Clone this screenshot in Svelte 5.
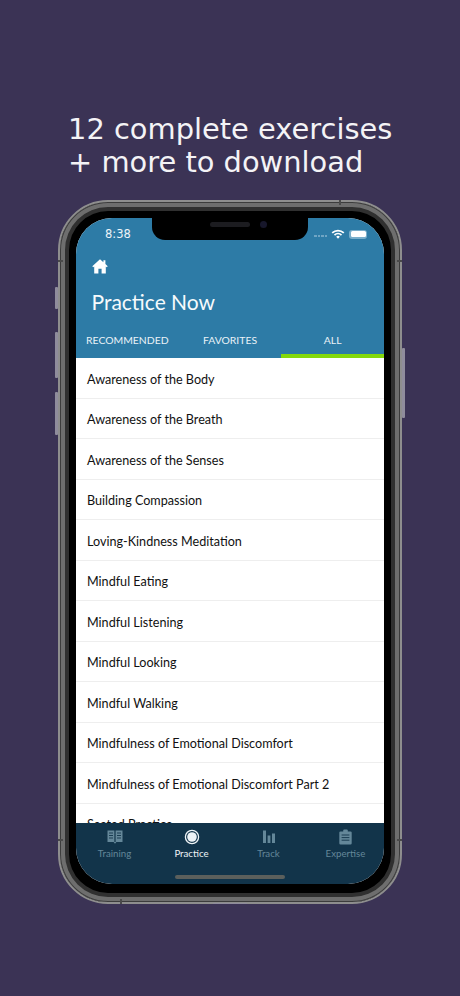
<script>
	const tabs = [
		{ label: "RECOMMENDED" },
		{ label: "FAVORITES" },
		{ label: "ALL", active: true },
	];

	const exercises = [
		"Awareness of the Body",
		"Awareness of the Breath",
		"Awareness of the Senses",
		"Building Compassion",
		"Loving-Kindness Meditation",
		"Mindful Eating",
		"Mindful Listening",
		"Mindful Looking",
		"Mindful Walking",
		"Mindfulness of Emotional Discomfort",
		"Mindfulness of Emotional Discomfort Part 2",
		"Seated Practice",
	];
</script>

<div class="page">
	<h1 class="headline">12 complete exercises<br />+ more to download</h1>

	<div class="phone">
		<span class="btn btn-mute"></span>
		<span class="btn btn-up"></span>
		<span class="btn btn-down"></span>
		<span class="btn btn-power"></span>
		<span class="btn btn-bottom"></span>

		<span class="band band-top"></span>
		<span class="band band-bottom"></span>
		<span class="band band-lt"></span>
		<span class="band band-rt"></span>
		<span class="band band-lb"></span>
		<span class="band band-rb"></span>

		<div class="screen">
			<div class="notch">
				<span class="speaker"></span>
				<span class="camera"></span>
			</div>

			<header class="header">
				<div class="status">
					<span class="time">8:38</span>
					<div class="status-icons">
						<span class="signal"><i></i><i></i><i></i><i></i></span>
						<svg class="wifi" width="14" height="10" viewBox="0 0 14 10" aria-hidden="true">
							<path d="M0.6 3.3A9 9 0 0 1 13.4 3.3L12.2 4.6A7.3 7.3 0 0 0 1.8 4.6Z" fill="#fff" />
							<path d="M2.9 5.5A5.8 5.8 0 0 1 11.1 5.5L9.9 6.8A4.1 4.1 0 0 0 4.1 6.8Z" fill="#fff" />
							<path d="M5.2 7.7A2.6 2.6 0 0 1 8.8 7.7L7 9.7Z" fill="#fff" />
						</svg>
						<span class="battery"><i></i></span>
					</div>
				</div>

				<svg class="home" width="16" height="15" viewBox="0 0 16 15" aria-hidden="true">
					<path
						d="M8 0.3L0.3 7.2 1.2 8.2 2.2 7.4V14.6H6.4V9.8H9.6V14.6H13.8V7.4L14.8 8.2 15.7 7.2 13.4 5.1V1.2H11.4V3.3Z"
						fill="#fff"
					/>
				</svg>

				<h2 class="title">Practice Now</h2>

				<nav class="tabs">
					{#each tabs as tab}
						<span class="tab" class:active={tab.active}>{tab.label}</span>
					{/each}
				</nav>
			</header>

			<ul class="list">
				{#each exercises as name}
					<li>{name}</li>
				{/each}
			</ul>

			<footer class="tabbar">
				<div class="item">
					<svg width="16" height="14" viewBox="0 0 16 14" aria-hidden="true">
						<path d="M0.5 0.5H7.4V12H0.5ZM8.6 0.5H15.5V12H8.6ZM6.6 12H9.4L8 13.8Z" fill="currentColor" />
						<path d="M2 3H6M2 5.5H6M2 8H6M10 3H14M10 5.5H14M10 8H14" stroke="#12344a" stroke-width="0.9" />
					</svg>
					<span>Training</span>
				</div>
				<div class="item current">
					<svg width="16" height="16" viewBox="0 0 16 16" aria-hidden="true">
						<circle cx="8" cy="8" r="6.6" fill="none" stroke="currentColor" stroke-width="1.3" />
						<circle cx="8" cy="8" r="4.8" fill="currentColor" />
					</svg>
					<span>Practice</span>
				</div>
				<div class="item">
					<svg width="14" height="14" viewBox="0 0 14 14" aria-hidden="true">
						<path d="M1 0.5H4V13H1ZM5.6 5.5H8.4V13H5.6ZM10 3.5H13V13H10Z" fill="currentColor" />
					</svg>
					<span>Track</span>
				</div>
				<div class="item">
					<svg width="13" height="16" viewBox="0 0 13 16" aria-hidden="true">
						<path
							d="M1.5 2.4H4.2V1.6A1 1 0 0 1 5.2 0.6H7.8A1 1 0 0 1 8.8 1.6V2.4H11.5A1.2 1.2 0 0 1 12.7 3.6V14.2A1.2 1.2 0 0 1 11.5 15.4H1.5A1.2 1.2 0 0 1 0.3 14.2V3.6A1.2 1.2 0 0 1 1.5 2.4Z"
							fill="currentColor"
						/>
						<path d="M2.6 6H10.4M2.6 8.6H10.4M2.6 11.2H10.4" stroke="#12344a" stroke-width="0.9" />
					</svg>
					<span>Expertise</span>
				</div>
				<span class="home-bar"></span>
			</footer>
		</div>
	</div>
</div>

<style>
	:global(body) {
		margin: 0;
		background: #3b3355;
	}

	.page {
		width: 460px;
		height: 996px;
		overflow: hidden;
		padding-top: 113px;
		box-sizing: border-box;
	}

	.headline {
		margin: 0 0 0 68px;
		font-family: "DejaVu Sans", sans-serif;
		font-size: 28.9px;
		font-weight: 400;
		line-height: 33px;
		color: #f4f3f6;
		white-space: nowrap;
	}

	.phone {
		position: relative;
		width: 344px;
		height: 704px;
		margin: 21px 0 0 58px;
		padding: 16px 16px 18px;
		box-sizing: border-box;
		border-radius: 50px;
		background: #000;
		border: 2px solid #8e8e8e;
		box-shadow:
			inset 0 0 0 1px #3c3c3c,
			inset 0 0 0 5px #6e6e6e,
			inset 0 0 0 9px #303030;
	}

	.btn {
		position: absolute;
		width: 3px;
		background: #8f8c9c;
		border-radius: 1px;
	}

	.btn-mute { left: -5px; top: 85px; height: 22px; }
	.btn-up { left: -5px; top: 130px; height: 46px; }
	.btn-down { left: -5px; top: 190px; height: 43px; }
	.btn-power { right: -5px; top: 146px; height: 70px; }
	.btn-bottom { left: 153px; bottom: -2px; width: 34px; height: 1px; }

	.band {
		position: absolute;
		background: #4a4a4a;
	}

	.band-top { top: -2px; left: 279px; width: 2px; height: 5px; }
	.band-bottom { bottom: -2px; left: 60px; width: 2px; height: 5px; }
	.band-lt { left: -2px; top: 58px; width: 5px; height: 2px; }
	.band-rt { right: -2px; top: 58px; width: 5px; height: 2px; }
	.band-lb { left: -2px; top: 637px; width: 5px; height: 2px; }
	.band-rb { right: -2px; top: 637px; width: 5px; height: 2px; }

	.screen {
		position: relative;
		display: flex;
		flex-direction: column;
		height: 100%;
		overflow: hidden;
		border-radius: 36px;
		background: #fff;
		font-family: Lato, "Liberation Sans", sans-serif;
	}

	.notch {
		position: absolute;
		top: 0;
		left: 76px;
		width: 156px;
		height: 22px;
		background: #000;
		border-radius: 0 0 13px 13px;
		z-index: 2;
	}

	.speaker {
		position: absolute;
		left: 58px;
		top: 4px;
		width: 40px;
		height: 5px;
		border-radius: 3px;
		background: #1c1c20;
	}

	.camera {
		position: absolute;
		left: 108px;
		top: 3px;
		width: 7px;
		height: 7px;
		border-radius: 50%;
		background: #17172b;
	}

	.header {
		flex: none;
		height: 140px;
		display: flex;
		flex-direction: column;
		background: #2d7ba6;
		color: #fff;
	}

	.status {
		display: flex;
		justify-content: space-between;
		align-items: center;
		height: 16px;
		margin-top: 8px;
		padding: 0 2px 0 29px;
	}

	.time {
		font-family: "DejaVu Sans", sans-serif;
		font-size: 11.5px;
		color: #eef4f8;
	}

	.status-icons {
		display: flex;
		align-items: center;
		gap: 4px;
		padding-right: 15px;
	}

	.signal {
		display: flex;
		gap: 1px;
		align-items: flex-end;
		margin-top: 4px;
	}

	.signal i {
		width: 2.5px;
		height: 2px;
		background: #6fa5c4;
	}

	.wifi {
		margin-top: -1px;
	}

	.battery {
		display: flex;
		width: 18px;
		height: 9px;
		padding: 1.5px;
		box-sizing: border-box;
		border-radius: 3px;
		background: #79aecb;
	}

	.battery i {
		flex: 1;
		background: #fff;
		border-radius: 1.5px;
	}

	.home {
		margin: 17px 0 0 16px;
	}

	.title {
		margin: 15px 0 0 15.5px;
		font-size: 21px;
		font-weight: 400;
		line-height: 26px;
		color: #f6fafc;
	}

	.tabs {
		display: grid;
		grid-template-columns: repeat(3, 1fr);
		margin-top: auto;
	}

	.tab {
		height: 32px;
		box-sizing: border-box;
		padding-top: 6px;
		border-bottom: 4px solid transparent;
		text-align: center;
		font-size: 10.4px;
		line-height: 16px;
		color: #eaf2f7;
	}

	.tab.active {
		border-bottom-color: #84d80c;
	}

	.list {
		flex: 1;
		min-height: 0;
		margin: 0;
		padding: 0;
		overflow: hidden;
		list-style: none;
	}

	.list li {
		height: 40.5px;
		box-sizing: border-box;
		padding: 0.5px 0 0 11px;
		border-bottom: 1px solid #eeeeee;
		font-size: 12.6px;
		line-height: 41px;
		color: #111;
		white-space: nowrap;
	}

	.tabbar {
		position: relative;
		flex: none;
		height: 61px;
		display: grid;
		grid-template-columns: repeat(4, 1fr);
		background: #12344a;
		color: #648799;
	}

	.item {
		display: flex;
		flex-direction: column;
		align-items: center;
		padding-top: 6px;
		font-size: 9.7px;
		line-height: 14px;
	}

	.item svg {
		height: 16px;
		margin-bottom: 1px;
	}

	.item.current {
		color: #eef3f6;
	}

	.home-bar {
		position: absolute;
		left: 99px;
		bottom: 5px;
		width: 110px;
		height: 4px;
		border-radius: 2px;
		background: #5b5f5c;
	}
</style>
